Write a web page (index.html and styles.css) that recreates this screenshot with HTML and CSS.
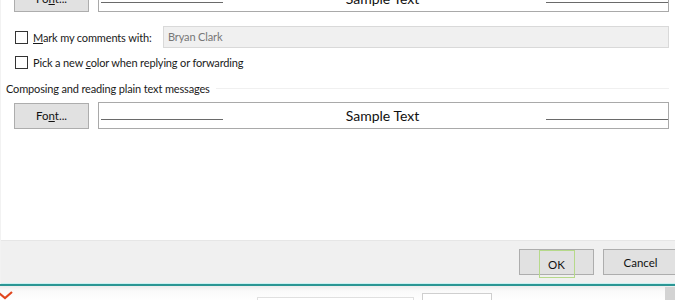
FILE: index.html
```html
<!DOCTYPE html>
<html>
<head>
	<meta charset="utf-8">
	<title>Options</title>
	<link rel="stylesheet" href="styles.css">
</head>
<body>
	<div class="dialog">
		<div class="content">
			<div class="font-row first">
				<button class="btn">Fo<u>n</u>t...</button>
				<div class="sample"><span class="rule"></span><span class="sample-text">Sample Text</span><span class="rule"></span></div>
			</div>

			<div class="check-row mark">
				<span class="box"></span>
				<label class="mark-label"><u>M</u>ark my comments with:</label>
				<div class="name-field">Bryan Clark</div>
			</div>
			<div class="check-row">
				<span class="box"></span>
				<label>Pick a new <u>c</u>olor when replying or forwarding</label>
			</div>

			<div class="section"><span>Composing and reading plain text messages</span></div>

			<div class="font-row">
				<button class="btn">Fo<u>n</u>t...</button>
				<div class="sample"><span class="rule"></span><span class="sample-text">Sample Text</span><span class="rule"></span></div>
			</div>
		</div>

		<div class="footer">
			<button class="btn ok"><span class="focus">OK</span></button>
			<button class="btn cancel">Cancel</button>
		</div>
	</div>

	<div class="taskbar">
		<svg class="tick" width="14" height="10" viewBox="0 0 14 10"><path d="M0 3 L6 8 L13 2" fill="none" stroke="#e0461e" stroke-width="2.2"/></svg>
		<span class="tab wide"></span>
		<span class="tab"></span>
		<span class="scroll"></span>
	</div>
</body>
</html>
```

FILE: styles.css
```css
body {
	margin: 0;
	width: 675px;
	height: 300px;
	overflow: hidden;
	background: #fff;
	font-family: Lato, "Noto Sans", sans-serif;
	font-size: 11px;
	letter-spacing: -0.15px;
	color: #1a1a1a;
}

.dialog {
	height: 284px;
	display: flex;
	flex-direction: column;
	border-left: 1px solid #f2f2f2;
}

.content {
	flex: 1;
	padding: 0 6px 0 4px;
	margin-top: -15px;
}

/* font + sample preview */
.font-row {
	display: flex;
	align-items: center;
	gap: 9px;
	padding-left: 9px;
	height: 27px;
}

.btn {
	width: 75px;
	height: 26px;
	border: 1px solid #adadad;
	background: #e1e1e1;
	font-family: inherit;
	font-size: 11.5px;
	letter-spacing: 0;
	color: #111;
	padding: 0;
}

.sample {
	flex: 1;
	height: 25px;
	border: 1px solid #a9a9a9;
	background: #fff;
	display: flex;
	align-items: center;
	justify-content: space-between;
	padding-left: 2px;
}

.rule {
	width: 122px;
	height: 1px;
	background: #6a6a6a;
	align-self: flex-end;
	margin-bottom: 8px;
}

.sample-text {
	font-family: Lato, "Liberation Sans", sans-serif;
	font-size: 14px;
	letter-spacing: 0;
	color: #111;
	position: relative;
	left: -2px;
}

/* check rows */
.check-row {
	display: flex;
	align-items: center;
	padding-left: 10px;
	height: 22px;
	white-space: nowrap;
}

.check-row.mark {
	margin-top: 14px;
	margin-bottom: 3px;
}

.box {
	width: 11px;
	height: 11px;
	border: 1px solid #333;
	background: #fff;
	margin-right: 5px;
}

.mark-label {
	width: 130px;
}

.name-field {
	flex: 1;
	height: 20px;
	line-height: 20px;
	border: 1px solid #d9d9d9;
	background: #f0f0f0;
	color: #777;
	padding-left: 4px;
}

/* section heading with faint rule */
.section {
	display: flex;
	align-items: center;
	margin: 8px 0 7px 1px;
	height: 14px;
}

.section::after {
	content: "";
	flex: 1;
	height: 1px;
	background: #f0f0f0;
	margin-left: 6px;
}

/* bottom buttons */
.footer {
	height: 44px;
	background: #f0f0f0;
	border-top: 1px solid #e6e6e6;
	display: flex;
	align-items: center;
	justify-content: flex-end;
	gap: 9px;
	margin-right: -3px;
	box-sizing: border-box;
	border-bottom: 1px solid #c9f1f1;
}

.ok .focus {
	display: inline-block;
	width: 36px;
	height: 28px;
	line-height: 28px;
	border: 1px solid #b6d98a;
	box-sizing: border-box;
}

.taskbar {
	height: 16px;
	border-top: 2px solid #2b9694;
	background: linear-gradient(#ececec, #fafafa 5px, #fff);
	position: relative;
}

.tick {
	position: absolute;
	left: -1px;
	top: 4px;
}

.tab {
	position: absolute;
	top: 7px;
	left: 422px;
	width: 68px;
	height: 12px;
	border: 1px solid #cfcfcf;
	background: #fff;
}

.tab.wide {
	top: 11px;
	left: 257px;
	width: 155px;
	border-color: #e0e0e0;
}

.scroll {
	position: absolute;
	right: 0;
	top: 1px;
	width: 10px;
	height: 16px;
	background: #d3d3d3;
}
```
